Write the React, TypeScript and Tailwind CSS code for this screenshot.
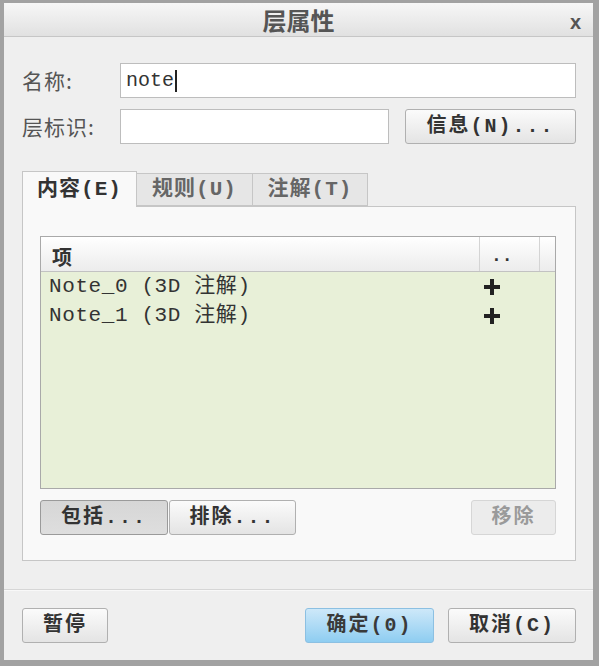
import React from "react";

const cjk = { fontFamily: '"Noto Sans CJK SC", "Noto Sans", sans-serif' };
const mono = { fontFamily: '"Liberation Mono", "Noto Sans CJK SC", monospace' };

function Btn({
  children,
  className = "",
  variant = "normal",
}: {
  children: React.ReactNode;
  className?: string;
  variant?: "normal" | "pressed" | "disabled" | "primary";
}) {
  const v =
    variant === "pressed"
      ? "border-[#9a9a9a] bg-gradient-to-b from-[#d6d6d6] to-[#dedede] text-[#333]"
      : variant === "disabled"
      ? "border-[#d6d6d6] bg-[#ececec] text-[#9a9a9a]"
      : variant === "primary"
      ? "border-[#8cc0e2] bg-gradient-to-b from-[#cde8f9] to-[#8ecdf1] text-[#3a3a3a]"
      : "border-[#b0b0b0] bg-gradient-to-b from-[#fbfbfb] to-[#e4e4e4] text-[#333]";
  return (
    <div
      className={`flex h-[35px] items-center justify-center rounded-[3px] border font-bold text-[20px] leading-none tracking-[2px] ${v} ${className}`}
      style={mono}
    >
      {children}
    </div>
  );
}

function Plus() {
  return (
    <svg width="16" height="16" viewBox="0 0 16 16">
      <rect x="6" y="0" width="4" height="16" fill="#222" />
      <rect x="0" y="6" width="16" height="4" fill="#222" />
    </svg>
  );
}

export default function App() {
  return (
    <div className="h-[666px] w-[599px] bg-[#a2a2a2] pl-[4px] pr-[6px] pt-[3px] pb-[6px]">
      <div className="flex h-full flex-col bg-[#efefef]">
        {/* Title bar */}
        <div className="relative flex h-[34px] items-center justify-center border-b border-[#c6c6c6] bg-gradient-to-b from-[#f7f7f7] to-[#e1e1e1]">
          <span className="text-[24px] font-bold leading-none text-[#555]" style={cjk}>
            层属性
          </span>
          <span
            className="absolute right-[12px] top-[4px] text-[20px] font-bold text-[#555]"
            style={{ fontFamily: '"Liberation Sans", sans-serif' }}
          >
            x
          </span>
        </div>

        <div className="flex flex-1 flex-col pl-[18px] pr-[17px]">
          {/* Row 1 */}
          <div className="mt-[26px] flex h-[35px] items-center">
            <div className="w-[98px] text-[21px] text-[#555] tracking-[1px]" style={cjk}>
              名称:
            </div>
            <div className="flex h-[35px] flex-1 items-center border border-[#bdbdbd] bg-white pl-[5px]">
              <span className="text-[20px] text-[#333]" style={mono}>
                note
              </span>
              <span className="ml-[1px] h-[22px] w-[2px] bg-[#222]" />
            </div>
          </div>

          {/* Row 2 */}
          <div className="mt-[11px] flex h-[35px] items-center">
            <div className="w-[98px] text-[21px] text-[#555] tracking-[1px]" style={cjk}>
              层标识:
            </div>
            <div className="h-[35px] w-[269px] border border-[#bdbdbd] bg-white" />
            <Btn className="ml-[16px] flex-1">信息(N)...</Btn>
          </div>

          {/* Tabs */}
          <div className="mt-[27px] flex items-end">
            <div
              className="relative z-10 -mb-px flex h-[36px] w-[115px] items-center justify-center border border-b-0 border-[#c6c6c6] bg-[#f9f9f9] text-[21px] font-bold tracking-[1px] text-[#333]"
              style={mono}
            >
              内容(E)
            </div>
            <div
              className="flex h-[33px] w-[116px] items-center justify-center border border-l-0 border-[#c6c6c6] bg-[#e6e6e6] text-[21px] font-bold tracking-[1px] text-[#666]"
              style={mono}
            >
              规则(U)
            </div>
            <div
              className="flex h-[33px] w-[115px] items-center justify-center border border-l-0 border-[#c6c6c6] bg-[#e6e6e6] text-[21px] font-bold tracking-[1px] text-[#666]"
              style={mono}
            >
              注解(T)
            </div>
          </div>

          {/* Panel */}
          <div className="flex h-[355px] flex-col border border-[#c6c6c6] bg-[#f9f9f9] pl-[17px] pr-[19px] pt-[29px]">
            <div className="flex h-[253px] flex-col border border-[#a9a9a9] bg-[#e8f0d8]">
              <div className="flex h-[35px] border-b border-[#c2c2c2] bg-gradient-to-b from-[#ffffff] to-[#ececec]">
                <div
                  className="flex flex-1 items-end pb-[0px] pl-[11px] text-[20px] font-bold leading-[28px] text-[#333]"
                  style={cjk}
                >
                  项
                </div>
                <div
                  className="flex w-[60px] items-end border-l border-[#d4d4d4] pb-[1px] pl-[11px] text-[18px] font-bold text-[#333]"
                  style={mono}
                >
                  ..
                </div>
                <div className="w-[16px] border-l border-[#d4d4d4]" />
              </div>
              {["Note_0 (3D 注解)", "Note_1 (3D 注解)"].map((t) => (
                <div key={t} className="flex h-[29px] items-center">
                  <div
                    className="flex-1 pl-[8px] text-[21px] tracking-[0.6px] text-[#333]"
                    style={mono}
                  >
                    {t}
                  </div>
                  <div className="flex w-[76px] items-center pl-[5px]">
                    <Plus />
                  </div>
                </div>
              ))}
            </div>
            <div className="mt-[11px] flex">
              <Btn variant="pressed" className="w-[128px]">
                包括...
              </Btn>
              <Btn className="ml-[1px] w-[127px]">排除...</Btn>
              <div className="flex-1" />
              <Btn variant="disabled" className="w-[85px]">
                移除
              </Btn>
            </div>
          </div>
        </div>

        {/* Separator and footer */}
        <div className="mt-[26px] h-[2px] border-t border-[#d6d6d6] bg-[#f8f8f8]" />
        <div className="flex pl-[18px] pr-[17px] pt-[17px] pb-[17px]">
          <Btn className="w-[86px]">暂停</Btn>
          <div className="flex-1" />
          <Btn variant="primary" className="w-[129px]">
            确定(0)
          </Btn>
          <Btn className="ml-[14px] w-[128px]">取消(C)</Btn>
        </div>
      </div>
    </div>
  );
}
